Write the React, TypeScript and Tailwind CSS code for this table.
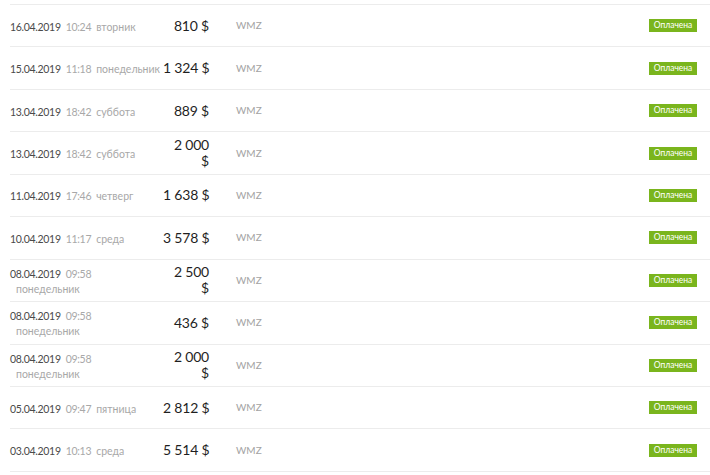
import React from "react";

interface Payment {
  date: string;
  time: string;
  weekday: string;
  amount: string;
  wrapAmount?: boolean;
  wrapDay?: boolean;
}

const payments: Payment[] = [
  { date: "16.04.2019", time: "10:24", weekday: "вторник", amount: "810" },
  { date: "15.04.2019", time: "11:18", weekday: "понедельник", amount: "1\u00a0324" },
  { date: "13.04.2019", time: "18:42", weekday: "суббота", amount: "889" },
  { date: "13.04.2019", time: "18:42", weekday: "суббота", amount: "2\u00a0000", wrapAmount: true },
  { date: "11.04.2019", time: "17:46", weekday: "четверг", amount: "1\u00a0638" },
  { date: "10.04.2019", time: "11:17", weekday: "среда", amount: "3\u00a0578" },
  { date: "08.04.2019", time: "09:58", weekday: "понедельник", amount: "2\u00a0500", wrapAmount: true, wrapDay: true },
  { date: "08.04.2019", time: "09:58", weekday: "понедельник", amount: "436", wrapDay: true },
  { date: "08.04.2019", time: "09:58", weekday: "понедельник", amount: "2\u00a0000", wrapAmount: true, wrapDay: true },
  { date: "05.04.2019", time: "09:47", weekday: "пятница", amount: "2\u00a0812" },
  { date: "03.04.2019", time: "10:13", weekday: "среда", amount: "5\u00a0514" },
];

function PaymentRow({ p }: { p: Payment }) {
  return (
    <div className="flex items-center h-[42.45px] border-t border-[#ececec] pr-[13px]">
      <div className="w-[153px] shrink-0 leading-[15px] whitespace-nowrap">
        <span className="text-[10.5px] tracking-[-0.3px] text-[#4a4a4a]">{p.date}</span>
        <span className="ml-[5px] text-[10.5px] tracking-[-0.3px] text-[#a8a8a8]">{p.time}</span>
        {p.wrapDay ? (
          <div className="ml-[6px] text-[10.5px] text-[#a8a8a8]">{p.weekday}</div>
        ) : (
          <span className="ml-[5px] text-[10.5px] text-[#a8a8a8]">{p.weekday}</span>
        )}
      </div>
      <div className="w-[46px] shrink-0 text-right text-[14px] leading-[16px] tracking-[-0.2px] text-[#1f1f1f]">
        {p.wrapAmount ? (
          <>
            <div>{p.amount}</div>
            <div>$</div>
          </>
        ) : (
          <span className="whitespace-nowrap">{p.amount} $</span>
        )}
      </div>
      <div className="ml-[27px] text-[10px] text-[#a3a3a3]">WMZ</div>
      <div className="flex-1" />
      <div className="h-[13px] w-[48px] bg-[#7ab51d] text-white text-[8.5px] leading-[13px] text-center">
        Оплачена
      </div>
    </div>
  );
}

export default function App() {
  return (
    <div
      className="bg-white w-[710px] h-[475px] overflow-hidden pt-[4px] pl-[10px]"
      style={{ fontFamily: "Lato, 'Open Sans', sans-serif" }}
    >
      {payments.map((p, i) => (
        <PaymentRow key={i} p={p} />
      ))}
      <div className="border-t border-[#ececec]" />
    </div>
  );
}
